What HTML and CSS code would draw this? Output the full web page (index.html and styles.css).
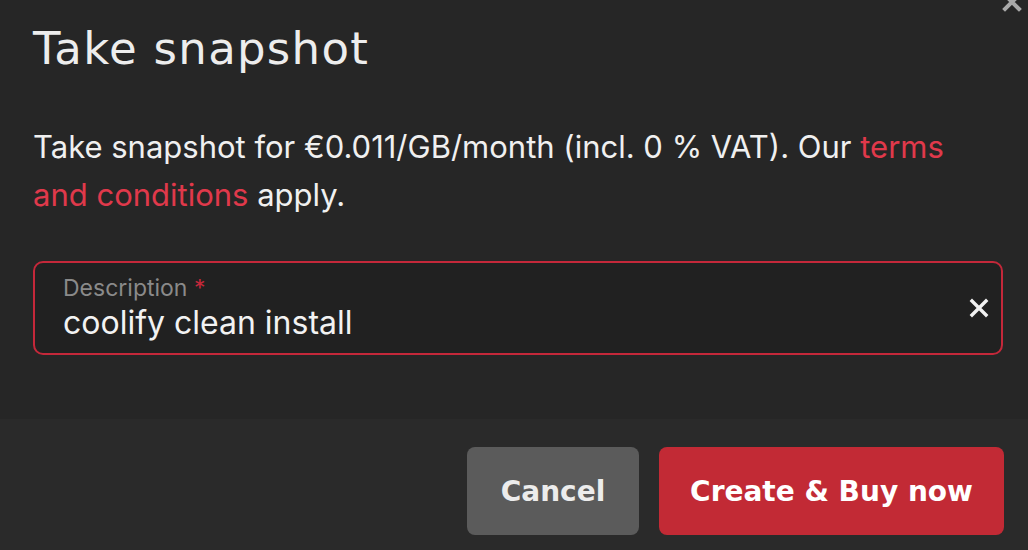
FILE: index.html
```html
<!DOCTYPE html>
<html lang="en">

<head>
    <meta charset="UTF-8">
    <meta name="viewport" content="width=device-width, initial-scale=1.0">
    <title>Take snapshot</title>
    <link rel="stylesheet" href="styles.css">
</head>

<body>
    <div class="modal">
        <button class="close" aria-label="Close">
            <svg width="20" height="20" viewBox="0 0 20 20"><path d="M3 3 L17 17 M17 3 L3 17" stroke="#a9a9a9" stroke-width="4" stroke-linecap="square"/></svg>
        </button>
        <div class="modal-body">
            <h1>Take snapshot</h1>
            <p class="info">Take snapshot for €0.011/GB/month (incl. 0 % VAT). Our <a href="#">terms</a> <a href="#">and conditions</a> apply.</p>
            <div class="field">
                <div class="field-text">
                    <label for="desc">Description <span class="req">*</span></label>
                    <input type="text" id="desc" value="coolify clean install">
                </div>
                <button class="clear" aria-label="Clear">
                    <svg width="20" height="20" viewBox="0 0 20 20"><path d="M3 3 L17 17 M17 3 L3 17" stroke="#f2f2f2" stroke-width="3.4" stroke-linecap="square"/></svg>
                </button>
            </div>
        </div>
        <div class="modal-footer">
            <button class="btn btn-cancel">Cancel</button>
            <button class="btn btn-primary">Create &amp; Buy now</button>
        </div>
    </div>
</body>

</html>
```

FILE: styles.css
```css
body {
    margin: 0;
    background-color: #262626;
    font-family: Inter, "Open Sans", sans-serif;
    color: #f0f0f0;
    overflow: hidden;
}

.modal {
    position: relative;
    width: 1028px;
    height: 550px;
    display: flex;
    flex-direction: column;
}

.close {
    position: absolute;
    top: -8px;
    right: 6px;
    background: none;
    border: none;
    padding: 0;
}

.modal-body {
    padding: 22px 25px 0 33px;
    height: 397px;
}

h1 {
    font-family: "DejaVu Sans", sans-serif;
    font-weight: normal;
    font-size: 45px;
    margin: 0 0 48px 0;
    color: #ededed;
    letter-spacing: 1.3px;
}

.info {
    font-size: 31px;
    line-height: 48px;
    margin: 0 0 42px 0;
    color: #f0f0f0;
}

.info a {
    color: #e0394b;
    text-decoration: none;
}

.field {
    display: flex;
    align-items: center;
    height: 90px;
    border: 2px solid #c4283a;
    border-radius: 10px;
    background-color: #212121;
    padding: 0 12px 0 28px;
}

.field-text {
    flex: 1;
    display: flex;
    flex-direction: column;
}

label {
    font-size: 23px;
    color: #8a8a8a;
    line-height: 26px;
}

.req {
    color: #c4283a;
}

input[type="text"] {
    font-family: Inter, sans-serif;
    font-size: 32px;
    color: #f2f2f2;
    background: none;
    border: none;
    padding: 0;
    margin-top: 2px;
    outline: none;
}

.clear {
    background: none;
    border: none;
    padding: 0;
    width: 20px;
    height: 20px;
}

.modal-footer {
    flex: 1;
    background-color: #2a2a2a;
    display: flex;
    justify-content: flex-end;
    align-items: flex-start;
    gap: 20px;
    padding: 28px 24px 0 0;
}

.btn {
    font-family: "DejaVu Sans", sans-serif;
    font-weight: bold;
    font-size: 28px;
    height: 88px;
    border: none;
    border-radius: 8px;
    padding: 0 20px;
    cursor: pointer;
}

.btn-cancel {
    background-color: #5b5b5b;
    color: #ececec;
    width: 172px;
}

.btn-primary {
    background-color: #c22a35;
    color: #ffffff;
    width: 345px;
}
```
